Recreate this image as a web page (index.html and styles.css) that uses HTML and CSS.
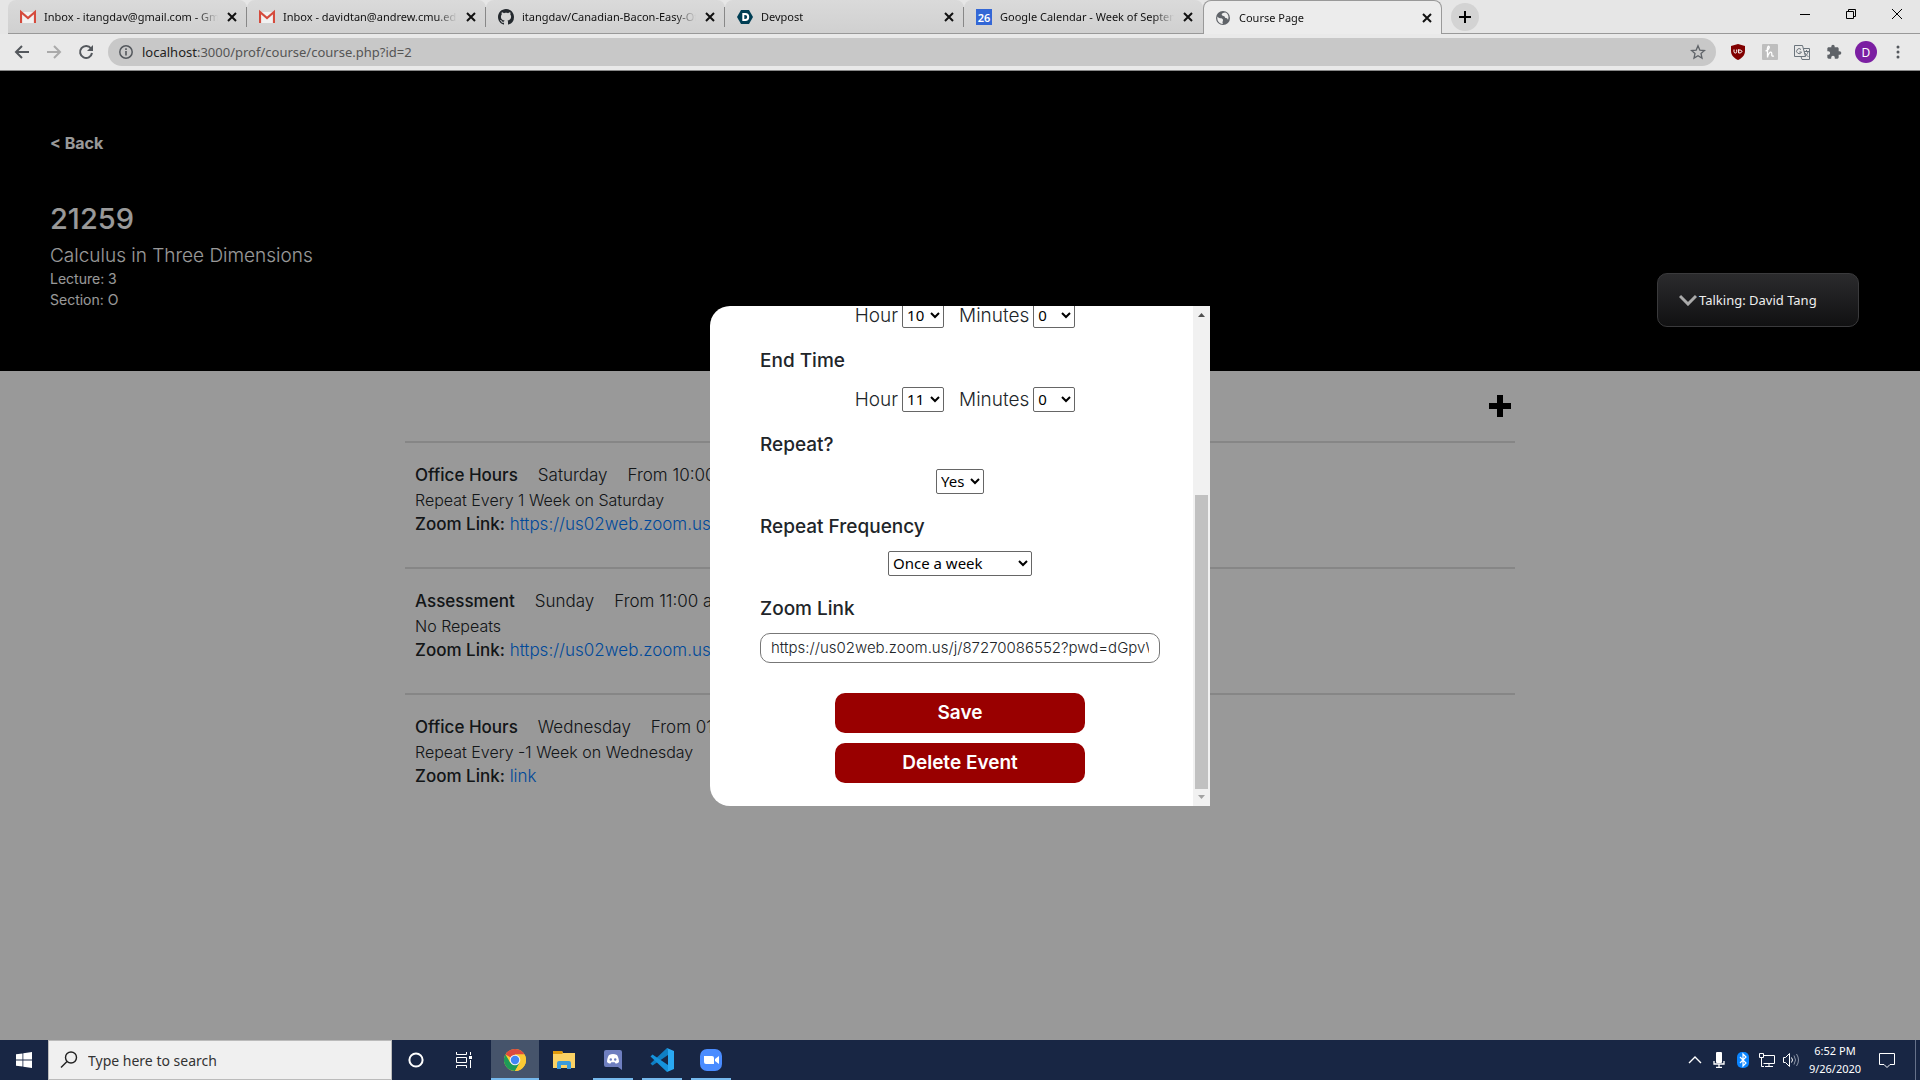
FILE: index.html
```html
<!DOCTYPE html>
<html lang="en">
<head>
<meta charset="utf-8">
<title>Course Page</title>
<link rel="stylesheet" href="styles.css">
</head>
<body>
<svg class="defs" aria-hidden="true">
  <symbol id="x" viewBox="0 0 12 12"><path d="M2 2l8 8M10 2l-8 8" stroke="#111" stroke-width="2"/></symbol>
  <symbol id="gmail" viewBox="0 0 16 16"><path d="M1 3h14v11H1z" fill="#f1f1f1"/><path d="M1 14V3l7 6 7-6v11" fill="none" stroke="#d54b3d" stroke-width="2.2"/></symbol>
</svg>
<header class="browser">
  <nav class="tabs" aria-label="Tabs">
    <div class="tab"><svg class="fav"><use href="#gmail"/></svg><span class="tab-title">Inbox - itangdav@gmail.com - Gmail</span><button class="close" aria-label="Close tab"><svg><use href="#x"/></svg></button></div>
    <div class="tab"><svg class="fav"><use href="#gmail"/></svg><span class="tab-title">Inbox - davidtan@andrew.cmu.edu</span><button class="close" aria-label="Close tab"><svg><use href="#x"/></svg></button></div>
    <div class="tab"><svg class="fav" viewBox="0 0 16 16"><path fill="#24292e" d="M8 0C3.58 0 0 3.58 0 8c0 3.54 2.29 6.53 5.47 7.59.4.07.55-.17.55-.38 0-.19-.01-.82-.01-1.49-2.01.37-2.53-.49-2.69-.94-.09-.23-.48-.94-.82-1.13-.28-.15-.68-.52-.01-.53.63-.01 1.08.58 1.23.82.72 1.21 1.87.87 2.33.66.07-.52.28-.87.51-1.07-1.78-.2-3.64-.89-3.64-3.95 0-.87.31-1.59.82-2.15-.08-.2-.36-1.02.08-2.12 0 0 .67-.21 2.2.82.64-.18 1.32-.27 2-.27s1.36.09 2 .27c1.53-1.04 2.2-.82 2.2-.82.44 1.1.16 1.92.08 2.12.51.56.82 1.27.82 2.15 0 3.07-1.87 3.75-3.65 3.95.29.25.54.73.54 1.48 0 1.07-.01 1.93-.01 2.2 0 .21.15.46.55.38A8.01 8.01 0 0 0 16 8c0-4.42-3.58-8-8-8z"/></svg><span class="tab-title">itangdav/Canadian-Bacon-Easy-Office</span><button class="close" aria-label="Close tab"><svg><use href="#x"/></svg></button></div>
    <div class="tab"><svg class="fav" viewBox="0 0 16 16"><path d="M4 1h8l4 7-4 7H4L0 8z" fill="#003e54"/><path d="M6.3 5h1.9a3 3 0 0 1 0 6H6.3z" fill="none" stroke="#fff" stroke-width="2"/></svg><span class="tab-title">Devpost</span><button class="close" aria-label="Close tab"><svg><use href="#x"/></svg></button></div>
    <div class="tab"><span class="fav cal">26</span><span class="tab-title">Google Calendar - Week of September</span><button class="close" aria-label="Close tab"><svg><use href="#x"/></svg></button></div>
    <div class="tab active"><svg class="fav" viewBox="0 0 16 16"><circle cx="8" cy="8" r="7" fill="#5f6368"/><path d="M2.500 6.500C4 9 6 7.500 7.500 9s-1 3 .5 5C4 14.200 1.500 10 2.500 6.500zM8 3c-2 1-1.500 2.500.5 3s1 2 2.500 2 1.500 1 2 2c1.500-4-.5-7-3-7.500z" fill="#eee"/></svg><span class="tab-title">Course Page</span><button class="close" aria-label="Close tab"><svg><use href="#x"/></svg></button></div>
    <div class="strip-end">
      <button class="newtab" aria-label="New tab"><svg viewBox="0 0 12 12"><path d="M6 0v12M0 6h12" stroke="#000" stroke-width="2"/></svg></button>
      <div class="window">
        <button aria-label="Minimize"><svg viewBox="0 0 12 12"><path d="M1 6.500h10" stroke="#000"/></svg></button>
        <button aria-label="Restore"><svg viewBox="0 0 12 12"><path d="M1.500 3.500h7v7h-7zM3.500 3.500v-2h7v7h-2" fill="none" stroke="#000"/></svg></button>
        <button aria-label="Close window"><svg viewBox="0 0 12 12"><path d="M1 1l10 10M11 1L1 11" stroke="#000"/></svg></button>
      </div>
    </div>
  </nav>
  <div class="toolbar">
    <button aria-label="Back"><svg viewBox="0 0 16 16"><path d="M15 8H2M8 2L2 8l6 6" fill="none" stroke="#54585d" stroke-width="2"/></svg></button>
    <button aria-label="Forward"><svg viewBox="0 0 16 16"><path d="M1 8h13M8 2l6 6-6 6" fill="none" stroke="#aaa" stroke-width="2"/></svg></button>
    <button aria-label="Reload"><svg viewBox="0 0 16 16"><path d="M13 4.500A6 6 0 1 0 14 9" fill="none" stroke="#54585d" stroke-width="2"/><path d="M15 1v6H9z" fill="#54585d"/></svg></button>
    <div class="omnibox">
      <svg viewBox="0 0 16 16"><circle cx="8" cy="8" r="6.200" fill="none" stroke="#54585d" stroke-width="1.500"/><path d="M8 7v4.500M8 4.300v1.600" stroke="#54585d" stroke-width="1.600"/></svg>
      <a class="url" href="#"><span>localhost</span>:3000/prof/course/course.php?id=2</a>
      <svg viewBox="0 0 16 16"><path d="M8 1.800l1.800 4.300 4.700.4-3.500 3 1 4.600L8 11.700l-4 2.400 1-4.600-3.500-3 4.700-.4z" fill="none" stroke="#5f6368" stroke-width="1.300"/></svg>
    </div>
    <div class="extensions">
      <button aria-label="uBlock"><svg viewBox="0 0 16 16"><path d="M8 0l7 2v5c0 5-4 7.500-7 9-3-1.500-7-4-7-9V2z" fill="#800000"/><path d="M4 5.500v2.200c0 1.800 2.700 1.800 2.700 0V5.500M8.600 5.500V9c4.500.3 4.500-3.500 0-3z" fill="none" stroke="#fff"/></svg></button>
      <button aria-label="Honey"><svg viewBox="0 0 16 16"><rect width="16" height="16" rx="1" fill="#bebebe"/><path d="M3.500 7C6.500 6 8 3.500 7 2.500S5 4 5.500 6v7.500C6 10 8.500 7 9.500 8.500S8.500 13 12 12" fill="none" stroke="#fff" stroke-width="1.300"/></svg></button>
      <button aria-label="Translate"><svg viewBox="0 0 16 16"><path d="M.5 1.500h8l3 11H.5zM9.300 4.500h6.200v11H8l-1-3" fill="none" stroke="#6b747c"/><path d="M7 5.500a2.500 2.500 0 1 0 .5 2.500H5.300M10 7.500h5M12.500 6v1.500M14 8c-.5 2-2 3.500-3 4M11 9c.5 1.500 2 3 3.500 3.500" fill="none" stroke="#6b747c"/></svg></button>
      <button aria-label="Extensions"><svg viewBox="0 0 24 24"><path fill="#5f6368" d="M20.500 11H19V7c0-1.100-.9-2-2-2h-4V3.500a2.500 2.500 0 0 0-5 0V5H4c-1.100 0-2 .9-2 2v3.800h1.500a2.700 2.700 0 0 1 0 5.400H2V20c0 1.100.9 2 2 2h3.800v-1.500a2.700 2.700 0 0 1 5.400 0V22H17c1.100 0 2-.9 2-2v-4h1.500a2.500 2.500 0 0 0 0-5z"/></svg></button>
      <button class="avatar">D</button>
      <button aria-label="Menu"><svg viewBox="0 0 16 16" fill="#54585d"><circle cx="8" cy="3" r="1.500"/><circle cx="8" cy="8" r="1.500"/><circle cx="8" cy="13" r="1.500"/></svg></button>
    </div>
  </div>
</header>

<main class="page">
  <section class="hero">
    <a class="back" href="#">&lt; Back</a>
    <h1>21259</h1>
    <h2>Calculus in Three Dimensions</h2>
    <p>Lecture: 3</p>
    <p>Section: O</p>
  </section>
  <section class="events">
    <div class="events-head"><button aria-label="Add event"><svg viewBox="0 0 22 22"><path d="M8 0h6v8h8v6h-8v8H8v-8H0V8h8z"/></svg></button></div>
    <article class="event">
      <div class="when"><h3>Office Hours</h3><span>Saturday</span><span>From 10:00</span></div>
      <p class="repeat">Repeat Every 1 Week on Saturday</p>
      <p><b>Zoom Link:</b> <a href="#">https://us02web.zoom.us/j</a></p>
    </article>
    <article class="event">
      <div class="when"><h3>Assessment</h3><span>Sunday</span><span>From 11:00 am</span></div>
      <p class="repeat">No Repeats</p>
      <p><b>Zoom Link:</b> <a href="#">https://us02web.zoom.us/j</a></p>
    </article>
    <article class="event">
      <div class="when"><h3>Office Hours</h3><span>Wednesday</span><span>From 01</span></div>
      <p class="repeat">Repeat Every -1 Week on Wednesday</p>
      <p><b>Zoom Link:</b> <a href="#">link</a></p>
    </article>
  </section>

  <div class="overlay">
    <div class="modal" role="dialog" aria-label="Edit event">
      <form class="form">
        <div class="time"><label for="sh">Hour</label><select id="sh"><option>10</option></select><label for="sm">Minutes</label><select id="sm"><option>0</option></select></div>
        <h4>End Time</h4>
        <div class="time"><label for="eh">Hour</label><select id="eh"><option>11</option></select><label for="em">Minutes</label><select id="em"><option>0</option></select></div>
        <label class="title" for="rep">Repeat?</label>
        <select id="rep" class="medium"><option>Yes</option></select>
        <label class="title" for="freq">Repeat Frequency</label>
        <select id="freq" class="wide"><option>Once a week</option></select>
        <label class="title" for="zoom">Zoom Link</label>
        <input id="zoom" type="text" value="https://us02web.zoom.us/j/87270086552?pwd=dGpvWkQ2">
        <div class="actions"><button type="button">Save</button><button type="button">Delete Event</button></div>
      </form>
      <div class="scrollbar">
        <svg viewBox="0 0 17 17"><path d="M5 11l3.500-4 3.500 4z" fill="#505050"/></svg>
        <div class="track"><div class="thumb"></div></div>
        <svg viewBox="0 0 17 17"><path d="M5 6l3.500 4L12 6z" fill="#a3a3a3"/></svg>
      </div>
    </div>
  </div>
  <div class="talking"><svg viewBox="0 0 18 12"><path d="M1 2l8 8 8-8" fill="none" stroke="#aaa" stroke-width="3"/></svg><span>Talking: David Tang</span></div>
</main>

<footer class="taskbar">
  <button class="task" aria-label="Start"><svg viewBox="0 0 16 16" width="16" height="16"><path fill="#fff" d="M0 2.300l6.500-.9v6.200H0zM7.300 1.300L16 0v7.600H7.300zM0 8.400h6.500v6.200L0 13.700zM7.300 8.400H16V16l-8.700-1.300z"/></svg></button>
  <label class="search"><svg viewBox="0 0 18 18"><circle cx="11" cy="6.500" r="5.500" fill="none" stroke="#222" stroke-width="1.400"/><path d="M7 10.500L1 16.500" stroke="#222" stroke-width="1.400"/></svg><input type="text" placeholder="Type here to search" aria-label="Search"></label>
  <button class="task" aria-label="Cortana"><svg viewBox="0 0 16 16" width="16" height="16"><circle cx="8" cy="8" r="6.600" fill="none" stroke="#fff" stroke-width="2"/></svg></button>
  <button class="task" aria-label="Task view"><svg viewBox="0 0 16 16" width="16" height="16"><path d="M.5 0v2.500h10V0M.5 16v-2.500h10V16M.5 5.500h10v5H.5zM14.500 0v3M14.500 8v8" fill="none" stroke="#fff"/><path d="M13 4h3v3h-3z" fill="#fff"/></svg></button>
  <div class="apps">
    <button class="task open current" aria-label="Chrome"><svg viewBox="0 0 24 24" width="22" height="22"><circle cx="12" cy="12" r="12" fill="#fcc934"/><path d="M12 12L1.600 6A12 12 0 0 1 22.400 6H12z" fill="#dd4b3e"/><path d="M1.600 6A12 12 0 0 0 12 24l5.200-9L12 12l-5.200 3z" fill="#1e9b57"/><path d="M12 6h10.400A12 12 0 0 1 12 24l5.200-9z" fill="#fcc934"/><circle cx="12" cy="12" r="5.800" fill="#f2f2f2"/><circle cx="12" cy="12" r="4.600" fill="#4285f4"/></svg></button>
    <button class="task" aria-label="File Explorer"><svg viewBox="0 0 22 18" width="22" height="18"><path d="M0 0h9l1 2h12v15H0z" fill="#fbd264"/><path d="M0 0h9l1 2-1 1H0z" fill="#e09a0b"/><path d="M4 18v-6a2 2 0 0 1 2-2h10a2 2 0 0 1 2 2v6h-4v-4H8v4z" fill="#3a9bdc"/></svg></button>
    <button class="task open" aria-label="Discord"><svg viewBox="0 0 20 20" width="20" height="20"><path d="M3 0h14a2 2 0 0 1 2 2v18l-4-3H3a2 2 0 0 1-2-2V2a2 2 0 0 1 2-2z" fill="#6f7fc0"/><path d="M6 5c3-1.300 5-1.300 8 0 1.500 2.500 2 5 2 7-1 1.300-2.500 1.500-3.500 1.500l-.8-1.200H8.300l-.8 1.200C6.500 13.500 5 13.300 4 12c0-2 .5-4.500 2-7z" fill="#fff"/><circle cx="7.800" cy="9.500" r="1.200" fill="#6f7fc0"/><circle cx="12.200" cy="9.500" r="1.200" fill="#6f7fc0"/></svg></button>
    <button class="task open" aria-label="Visual Studio Code"><svg viewBox="0 0 24 24" width="24" height="24"><path d="M18 7L2.500 17.500.5 15.500 17 0l1 1z" fill="#0f7fc4"/><path d="M18 17L2.500 6.500l-2 2L17 24l1-1z" fill="#1593dc"/><path d="M17 0l7 3v18l-7 3 1-2V2z" fill="#2aa9f2"/></svg></button>
    <button class="task open" aria-label="Zoom"><svg viewBox="0 0 22 22" width="22" height="22"><rect width="22" height="22" rx="7" fill="#4a8cff"/><path d="M4 7h8a2 2 0 0 1 2 2v6H6a2 2 0 0 1-2-2zM15 10l4-3v8l-4-3z" fill="#fff"/></svg></button>
  </div>
  <div class="tray">
    <svg viewBox="0 0 16 16"><path d="M2 11l6-6 6 6" fill="none" stroke="#fff" stroke-width="1.400"/></svg>
    <svg viewBox="0 0 16 16"><rect x="5" y="0" width="6" height="11" rx="1" fill="#fff"/><path d="M3 9v3h10V9M8 12v3M5 15.500h6" fill="none" stroke="#fff" stroke-width="1.300"/></svg>
    <svg viewBox="0 0 16 16"><rect x="2" width="12" height="16" rx="5" fill="#0a84ff"/><path d="M5 5l6 6-3 3V2l3 3-6 6" fill="none" stroke="#fff" stroke-width="1.200"/></svg>
    <svg viewBox="0 0 16 16"><path d="M5 3.500h10.500v8H4.500M10 11.500v3M6 14.500h8M.5 1.500h4v4h-4zM2.500 5.500v9H5" fill="none" stroke="#fff"/></svg>
    <svg viewBox="0 0 16 16"><path d="M.5 5.500h2l4-4v13l-4-4h-2z" fill="none" stroke="#fff"/><path d="M8.500 5.500q2 2.500 0 5" fill="none" stroke="#fff"/><path d="M11 3.500q3 4.500 0 9M13.500 2q4 6 0 12" fill="none" stroke="#8d96a8"/></svg>
    <time class="clock"><span>6:52 PM</span><span>9/26/2020</span></time>
    <svg viewBox="0 0 16 16"><path d="M.5 1.500h15v11H11l-3 3-3-3H.5z" fill="none" stroke="#fff"/></svg>
  </div>
</footer>
</body>
</html>
```
FILE: styles.css
```css
* { box-sizing: border-box; }
html, body { height: 100%; }
body {
  margin: 0;
  display: flex;
  flex-direction: column;
  overflow: hidden;
  font-family: Inter, sans-serif;
  color: #212529;
}
button { border: 0; padding: 0; background: none; font: inherit; color: inherit; }
h1, h2, h3, h4, p { margin: 0; }
a { text-decoration: none; color: #007bff; }
svg { display: block; flex: none; }
.defs { display: none; }

/* Browser window */
.browser, .taskbar, .talking, select { font-family: "Noto Sans", sans-serif; }
.browser { flex: none; border-bottom: 1px solid #888; background: #e6e6e6; color: #111; }
.tabs { display: flex; height: 34px; padding-left: 8px; font-size: 11px; }
.tab {
  position: relative;
  display: flex;
  flex: 0 1 239px;
  min-width: 0;
  align-items: center;
  gap: 8px;
  padding: 0 9px 0 12px;
  border-bottom: 1px solid #999;
  border-radius: 8px 8px 0 0;
  background: linear-gradient(#dadada, #d0d0d0);
}
.tab:has(+ .tab:not(.active))::after { content: ""; position: absolute; right: 0; top: 7px; width: 1px; height: 20px; background: #888; }
.tab.active { border: 1px solid #999; border-bottom: 0; background: #ececec; padding: 0 8px 0 11px; }
.tab-title {
  flex: 1;
  overflow: hidden;
  white-space: nowrap;
  line-height: 20px;
  mask-image: linear-gradient(to right, #000 88%, transparent);
}
.fav { width: 16px; height: 16px; flex: none; }
.cal { background: #3367d6; color: #fff; font-size: 11px; line-height: 17px; text-align: center; font-weight: 600; }
.close svg { width: 12px; height: 12px; }
.strip-end { display: flex; flex: 1; align-items: center; justify-content: space-between; border-bottom: 1px solid #999; padding-left: 9px; }
.newtab { display: grid; place-items: center; width: 28px; height: 28px; border-radius: 50%; background: #d3d3d3; }
.newtab svg, .window svg { width: 12px; height: 12px; }
.window { display: flex; align-self: flex-start; }
.window button { display: grid; place-items: center; width: 46px; height: 28px; }
.toolbar { display: flex; align-items: center; height: 36px; padding: 0 6px; background: #e9e9e9; }
.toolbar > button, .extensions button { display: grid; place-items: center; width: 32px; height: 28px; }
.toolbar svg { width: 16px; height: 16px; }
.omnibox { display: flex; flex: 1; align-items: center; gap: 8px; height: 28px; margin: 0 6px; padding: 0 10px; border-radius: 14px; background: #c8c8c8; }
.url { flex: 1; font-size: 13px; color: #555; }
.url span { color: #222; }
.extensions { display: flex; align-items: center; }
.extensions .avatar { width: 22px; height: 22px; margin: 0 5px; border-radius: 50%; background: #7b1fa2; color: #fff; font-size: 12px; }

/* Course page */
.page { position: relative; flex: 1; min-height: 0; overflow: hidden; background: #fff; }
.hero { height: 300px; padding: 60px 50px 0; background: #000; color: #fff; }
.back { display: block; margin-bottom: 47px; font-size: 16px; line-height: 24px; font-weight: 700; color: #fff; }
.hero h1 { font-size: 29px; line-height: 34px; font-weight: 500; margin-bottom: 8px; }
.hero h2 { font-size: 19px; line-height: 24px; font-weight: 300; }
.hero p { font-size: 14px; line-height: 21px; }
.events { max-width: 1110px; margin: 0 auto; font-size: 17px; font-weight: 300; }
.events-head { display: flex; align-items: center; justify-content: flex-end; height: 70px; padding: 0 4px; }
.events-head svg { width: 22px; height: 22px; }
.event { height: 126px; padding: 20px 10px; border-top: 2px solid #e0e0e0; line-height: 24px; white-space: nowrap; }
.when { display: flex; gap: 20px; line-height: 25px; }
.event h3 { font-size: 17px; font-weight: 500; }
.event b { font-weight: 500; }
.repeat { font-size: 16px; }

/* Event dialog */
.overlay { position: absolute; inset: 0; display: flex; align-items: center; justify-content: center; background: rgba(0, 0, 0, .4); }
.modal { display: flex; width: 500px; height: 500px; overflow: hidden; border-radius: 20px 0 0 20px; background: #fff; }
.form { display: flex; flex: 1; min-width: 0; flex-direction: column; justify-content: flex-end; align-items: center; padding: 0 33px 23px 50px; }
.form > * { flex: none; }
.form h4, .title { align-self: flex-start; margin: 21px 0 12px; font-size: 19px; line-height: 24px; font-weight: 500; }
.time { display: flex; align-items: flex-end; height: 27px; padding-left: 10px; font-size: 19px; line-height: 25px; font-weight: 300; }
.time select { width: 42px; margin-left: 4px; }
.time select + label { margin-left: 15px; }
select { height: 25px; padding: 0; border: 1px solid #666; border-radius: 2px; background-color: #fff; color: #000; font-size: 15px; }
.medium { width: 48px; }
.wide { width: 144px; }
.form input { width: 100%; height: 30px; padding: 0 10px; border: 1px solid #777; border-radius: 10px; font: 300 15px Inter, sans-serif; color: #212529; }
.actions { display: flex; flex-direction: column; gap: 10px; width: 250px; margin-top: 30px; }
.actions button { height: 40px; border-radius: 10px; background: #900; color: #fff; font-size: 19px; font-weight: 600; }
.scrollbar { display: flex; flex-direction: column; width: 17px; background: #f1f1f1; }
.scrollbar svg { width: 17px; height: 17px; }
.track { display: flex; flex: 1; flex-direction: column; justify-content: flex-end; padding: 0 2px; }
.thumb { height: 63%; background: #c1c1c1; }

/* Meeting badge floating over the window */
.talking { position: absolute; top: 202px; right: 61px; display: flex; align-items: center; gap: 2px; width: 202px; height: 54px; padding-left: 21px; border: 1px solid #3a3a3c; border-radius: 10px; background: linear-gradient(#2b2b2d, #111112); color: #eee; font-size: 13px; }
.talking svg { width: 18px; height: 12px; }

/* Taskbar */
.taskbar { display: flex; flex: none; align-items: stretch; height: 40px; background: #182644; color: #fff; }
.task { display: grid; place-items: center; width: 48px; border-bottom: 3px solid transparent; border-top: 3px solid transparent; }
.search { display: flex; align-items: center; gap: 10px; width: 344px; padding: 0 11px; border: 1px solid #bbb; background: #f0f0f0; }
.search svg { width: 18px; height: 18px; }
.search input { flex: 1; border: 0; padding: 0; background: none; font: 14px "Noto Sans", sans-serif; }
.search input::placeholder { color: #333; }
.apps { display: flex; gap: 1px; margin-left: 3px; }
.open { background: linear-gradient(#76b9ed, #76b9ed) bottom / 40px 2px no-repeat border-box; }
.current { background: linear-gradient(#76b9ed, #76b9ed) bottom / 48px 2px no-repeat border-box, #46546b border-box; }
.tray { display: flex; align-items: center; gap: 8px; margin-left: auto; margin-right: 4px; padding-right: 20px; border-right: 1px solid #66718a; }
.tray svg { width: 16px; height: 16px; }
.clock { display: flex; flex-direction: column; width: 56px; margin: 0 8px 0 0; text-align: center; font-size: 11px; line-height: 18px; }
```
